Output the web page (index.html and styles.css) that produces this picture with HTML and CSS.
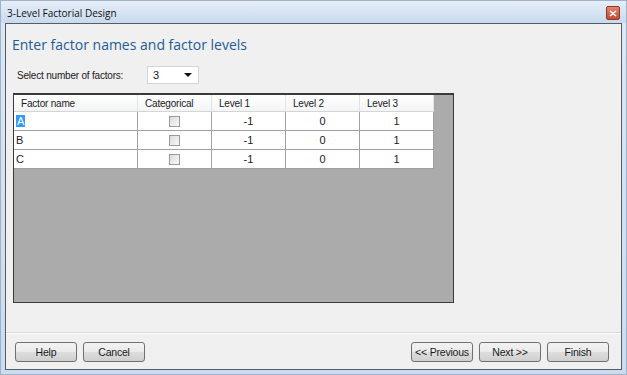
FILE: index.html
```html
<!DOCTYPE html>
<html lang="en">
<head>
    <meta charset="UTF-8">
    <meta name="viewport" content="width=device-width, initial-scale=1.0">
    <title>3-Level Factorial Design</title>
    <link rel="stylesheet" href="styles.css">
</head>
<body>
    <div class="window">
        <div class="titlebar">
            <span class="title">3-Level Factorial Design</span>
            <span class="close">
                <svg width="8" height="7" viewBox="0 0 8 7">
                    <path d="M1 1 L7 6 M7 1 L1 6" stroke="#fff" stroke-width="1.6"/>
                </svg>
            </span>
        </div>

        <div class="panel">
            <h1>Enter factor names and factor levels</h1>

            <div class="select-row">
                <label>Select number of factors:</label>
                <div class="combo">
                    <span>3</span>
                    <span class="arrow"></span>
                </div>
            </div>

            <div class="grid">
                <table>
                    <thead>
                        <tr>
                            <th class="col-name">Factor name</th>
                            <th class="col-cat">Categorical</th>
                            <th class="col-lvl">Level 1</th>
                            <th class="col-lvl">Level 2</th>
                            <th class="col-lvl">Level 3</th>
                        </tr>
                    </thead>
                    <tbody>
                        <tr>
                            <td><span class="selected">A</span></td>
                            <td class="center"><span class="check"></span></td>
                            <td class="center">-1</td>
                            <td class="center">0</td>
                            <td class="center">1</td>
                        </tr>
                        <tr>
                            <td>B</td>
                            <td class="center"><span class="check"></span></td>
                            <td class="center">-1</td>
                            <td class="center">0</td>
                            <td class="center">1</td>
                        </tr>
                        <tr>
                            <td>C</td>
                            <td class="center"><span class="check"></span></td>
                            <td class="center">-1</td>
                            <td class="center">0</td>
                            <td class="center">1</td>
                        </tr>
                    </tbody>
                </table>
            </div>

            <div class="footer">
                <div class="group">
                    <button type="button">Help</button>
                    <button type="button">Cancel</button>
                </div>
                <div class="group">
                    <button type="button">&lt;&lt; Previous</button>
                    <button type="button">Next &gt;&gt;</button>
                    <button type="button">Finish</button>
                </div>
            </div>
        </div>
    </div>
</body>
</html>
```

FILE: styles.css
```css
body {
    margin: 0;
    padding: 0;
    font-family: "Liberation Sans", Arial, sans-serif;
    font-size: 10px;
    color: #1a1a1a;
}

.window {
    width: 627px;
    height: 375px;
    box-sizing: border-box;
    background: linear-gradient(to bottom, #dce8f5, #c9dcf0);
    border: 1px solid #9fb2c6;
    display: flex;
    flex-direction: column;
}

.titlebar {
    height: 22px;
    display: flex;
    align-items: center;
    justify-content: space-between;
    padding: 0 6px 0 6px;
    background: linear-gradient(to bottom, #e6eef8, #c8daee);
}

.title {
    font-family: "Open Sans", sans-serif;
    font-size: 10px;
    color: #111;
    margin-top: 1px;
}

.close {
    width: 12px;
    height: 12px;
    margin-top: 2px;
    border-radius: 2px;
    background: linear-gradient(to bottom, #e6836d, #c44c2e);
    border: 1px solid #8a3a2c;
    display: flex;
    align-items: center;
    justify-content: center;
}

.panel {
    flex: 1;
    margin: 0 4px 4px 4px;
    border: 1px solid #565c63;
    background: #f0f0f0;
    display: flex;
    flex-direction: column;
}

h1 {
    margin: 11px 0 0 6px;
    font-family: "Open Sans", sans-serif;
    font-weight: normal;
    font-size: 14px;
    color: #1f5c99;
    line-height: 20px;
}

.select-row {
    display: flex;
    align-items: center;
    margin: 10px 0 0 11px;
    height: 20px;
}

.select-row label {
    width: 130px;
    letter-spacing: -0.2px;
}

.combo {
    width: 52px;
    height: 18px;
    box-sizing: border-box;
    background: #fff;
    border: 1px solid #d4d4d4;
    display: flex;
    align-items: center;
    justify-content: space-between;
    padding: 0 6px 0 5px;
    font-size: 11px;
}

.arrow {
    width: 0;
    height: 0;
    border-left: 4px solid transparent;
    border-right: 4px solid transparent;
    border-top: 4px solid #111;
}

.grid {
    margin: 8px 0 0 7px;
    width: 441px;
    height: 210px;
    box-sizing: border-box;
    border: 1px solid #3a3a3a;
    border-top-width: 2px;
    background: #ababab;
}

table {
    border-collapse: collapse;
    table-layout: fixed;
    background: #fff;
}

th {
    height: 16px;
    padding: 0 0 0 7px;
    text-align: left;
    font-weight: normal;
    font-size: 10px;
    letter-spacing: -0.2px;
    background: linear-gradient(to bottom, #ffffff, #f3f4f6);
    border-right: 1px solid #e2e3e5;
    border-bottom: 1px solid #d5d5d5;
}

.col-name {
    width: 116px;
}

.col-cat {
    width: 66px;
}

.col-lvl {
    width: 66px;
}

td {
    height: 18px;
    padding: 0 0 0 2px;
    border: 1px solid #a0a0a0;
    border-left: none;
    border-top: none;
    font-size: 11px;
}

td.center {
    text-align: center;
    padding: 0;
}

.selected {
    background: #3399ff;
    color: #fff;
    padding: 0 1px;
}

.check {
    display: inline-block;
    width: 9px;
    height: 9px;
    border: 1px solid #9a9a9a;
    background: linear-gradient(135deg, #dcdcdc, #f8f8f8);
    vertical-align: middle;
}

.footer {
    margin-top: auto;
    border-top: 1px solid #d5d5d5;
    box-shadow: inset 0 1px 0 #fff;
    height: 37px;
    display: flex;
    justify-content: space-between;
    align-items: flex-start;
    padding: 9px 12px 0 9px;
    box-sizing: border-box;
}

.group {
    display: flex;
    gap: 6px;
}

button {
    width: 62px;
    height: 20px;
    font-family: "Liberation Sans", Arial, sans-serif;
    font-size: 10.5px;
    letter-spacing: -0.2px;
    color: #1a1a1a;
    border: 1px solid #707070;
    border-radius: 3px;
    background: linear-gradient(to bottom, #f2f2f2 0%, #ebebeb 50%, #dddddd 51%, #cfcfcf 100%);
    padding: 0;
}
```
